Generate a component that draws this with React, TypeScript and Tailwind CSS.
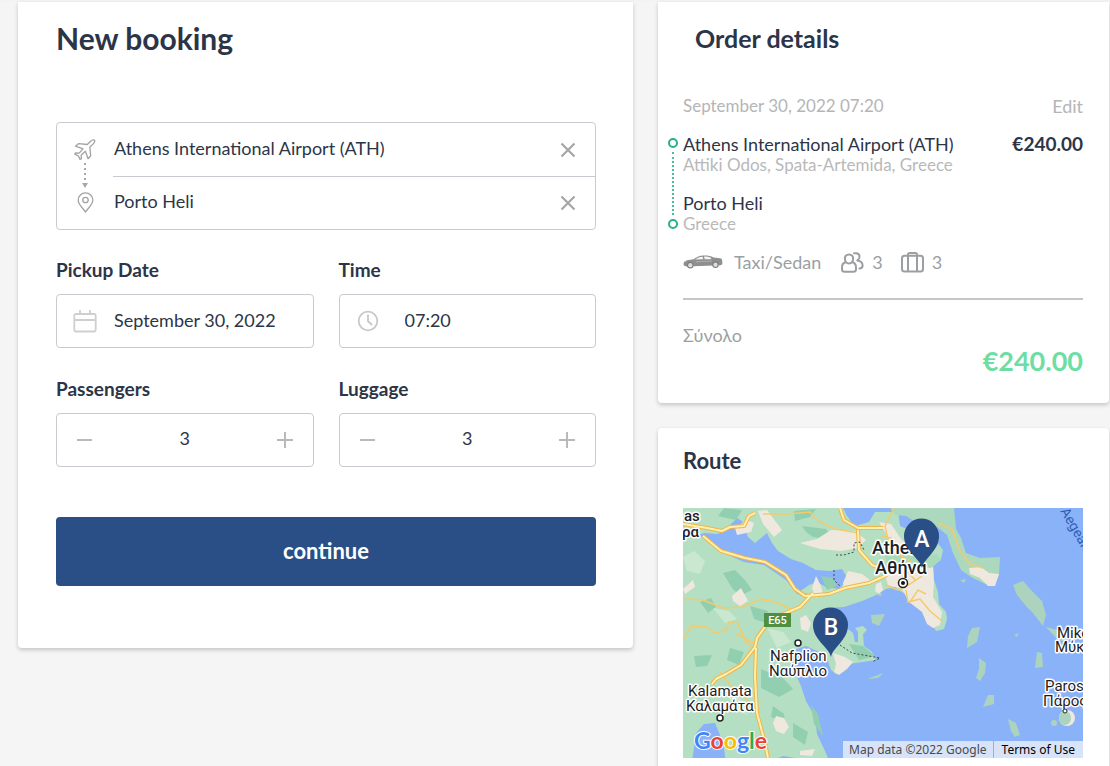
import React, { useState } from 'react';

interface CounterProps {
  id: string;
  label: string;
}

interface LocationRowProps {
  label: string;
  defaultValue: string;
}

const PlaneIcon = () => (
  <svg width="22" height="22" viewBox="0 0 22 22" fill="none" stroke="#a3a3a3" strokeWidth="1.3" strokeLinejoin="round">
    <path d="M20.6 1.2c-1.3-.6-3 .1-4 1.1l-3.300 3.200L4.700 4.600 1.500 7.200l7.500 2.700-3.800 4.200-3.700-.3-.7 1.300 3.500 1.700 1.700 3.600 1.400-.7-.2-3.800 4.200-3.600 2.700 7.400 2.600-3-.9-8.500 3.400-3.300c1-1 1.800-2.500 1.400-3.700z" />
  </svg>
);

const PinIcon = () => (
  <svg width="17" height="21" viewBox="0 0 17 21" fill="none" stroke="#a3a3a3" strokeWidth="1.3">
    <path d="M8.500 20C6.500 16.800 1.200 12.600 1.200 8.200a7.300 7.300 0 0 1 14.600 0c0 4.400-5.300 8.600-7.300 11.800z" />
    <circle cx="8.500" cy="8" r="2.700" />
  </svg>
);

const ArrowIcon = () => (
  <svg width="8" height="27" viewBox="0 0 8 27" fill="#a8a8a8">
    <path d="M3 2h2v2H3zM3 7h2v2H3zM3 12h2v2H3zM3 17h2v2H3zM1 22h6l-3 5z" />
  </svg>
);

const CrossIcon = () => (
  <svg width="16" height="16" viewBox="0 0 16 16" stroke="#a6a6a6" strokeWidth="2.200">
    <path d="M1.500 1.500l13 13M14.500 1.500l-13 13" />
  </svg>
);

const CalendarIcon = () => (
  <svg width="24" height="24" viewBox="0 0 24 24" fill="none" stroke="#cfcfcf" strokeWidth="1.800">
    <rect x="1.300" y="5" width="21.400" height="17.500" rx="1.500" />
    <path d="M1.300 11h21.400M7 1v4M17 1v4" />
  </svg>
);

const ClockIcon = () => (
  <svg width="22" height="22" viewBox="0 0 22 22" fill="none" stroke="#c8c8c8" strokeWidth="1.800">
    <circle cx="11" cy="11" r="9.300" />
    <path d="M11 4.500v6.800l4.200 3.700" />
  </svg>
);

const CarIcon = () => (
  <svg width="40" height="14" viewBox="0 0 40 14">
    <path d="M.5 9.500C.3 7.600 1.500 6 3.500 5.400c2.400-.7 4.900-.8 7-1.200C13.600 2 16.500.6 20.500.5c4.200-.1 7.400.5 10 2 2.900.2 6.300.4 8 1.300.8 1.200.9 3 .9 4.700-.2 1.200-1 1.600-2 1.700L4 11.400C2 11.400.8 10.700.5 9.500z" fill="#8f8f8f" />
    <path d="M12 4.400c2.300-1.500 4.600-2.500 7.600-2.700l.7 2.600zM21 1.600c2.700 0 5.100.3 7.600 1.600l-1.200 1.100h-5.700z" fill="#f3f3f3" />
    <circle cx="7.300" cy="10.300" r="3.200" fill="#777" />
    <circle cx="32.500" cy="9.700" r="3.200" fill="#777" />
    <circle cx="7.300" cy="10.300" r="2.200" fill="#dcdcdc" />
    <circle cx="32.500" cy="9.700" r="2.200" fill="#dcdcdc" />
    <path d="M1 7l2.500-.8M13 6.800l16-.8" stroke="#b5b5b5" strokeWidth=".8" />
  </svg>
);

const PeopleIcon = () => (
  <svg width="23" height="21" viewBox="0 0 23 21" fill="none" stroke="#9b9fa2" strokeWidth="2" strokeLinecap="round" strokeLinejoin="round">
    <path d="M8 2.500c2.500 0 4.100 1.800 4.100 4.300S10.500 11.500 8 11.500 3.900 9.300 3.900 6.800 5.500 2.500 8 2.500z" />
    <path d="M4.600 10.300C2.200 10.900 1 12.700 1 15.500v1.700c0 1.700.9 2.600 2.600 2.600h8.800c1.700 0 2.600-.9 2.600-2.600v-1.700c0-2.800-1.200-4.600-3.600-5.200M13 1.200h2c2.300 0 3.500 1.300 3.500 3.600 0 1.600-.7 2.900-2.200 3.700 3.600.6 5.300 2.200 5.300 4.800 0 2.200-1.200 3.300-3.200 3.300" />
  </svg>
);

const LuggageIcon = () => (
  <svg width="23" height="21" viewBox="0 0 23 21" fill="none" stroke="#9b9fa2" strokeWidth="2">
    <rect x="1" y="3.800" width="21" height="15.700" rx="2.500" />
    <path d="M7 19.500V2.500C7 1.600 7.600 1 8.500 1h6c.9 0 1.500.6 1.500 1.500v17" />
  </svg>
);

const LocationRow: React.FC<LocationRowProps> = ({ label, defaultValue }) => {
  const [value, setValue] = useState(defaultValue);

  return (
    <div className="flex h-[53px] items-center border-[#c9cacf] pr-[19px] not-first:border-t">
      <input
        aria-label={label}
        value={value}
        onChange={(e) => setValue(e.target.value)}
        className="w-full min-w-0 flex-1 bg-transparent pb-1 pl-px text-[18px] leading-6 outline-none"
      />
      <button type="button" aria-label={`Clear ${label}`} onClick={() => setValue('')}>
        <CrossIcon />
      </button>
    </div>
  );
};

const Counter: React.FC<CounterProps> = ({ id, label }) => {
  const [count, setCount] = useState(3);

  return (
    <div>
      <label htmlFor={id} className="mb-3 block text-[19px] leading-6 font-bold">{label}</label>
      <div className="flex h-[54px] items-center rounded border border-[#c9cacf] px-5">
        <button type="button" aria-label={`Fewer ${label}`} onClick={() => setCount(Math.max(0, count - 1))}>
          <svg width="16" height="16" viewBox="0 0 16 16" stroke="#b9b9b9" strokeWidth="2">
            <path d="M0 8h15" />
          </svg>
        </button>
        <input
          id={id}
          inputMode="numeric"
          value={count}
          onChange={(e) => setCount(Number(e.target.value) || 0)}
          className="w-full min-w-0 flex-1 bg-transparent pb-1 text-center text-[18px] leading-6 outline-none"
        />
        <button type="button" aria-label={`More ${label}`} onClick={() => setCount(count + 1)}>
          <svg width="16" height="16" viewBox="0 0 16 16" stroke="#b9b9b9" strokeWidth="2">
            <path d="M0 8h16M8 0v16" />
          </svg>
        </button>
      </div>
    </div>
  );
};

const RouteMap = () => (
  <svg viewBox="0 0 400 250" preserveAspectRatio="xMidYMid slice" className="block w-full" role="img" aria-label="Route from Athens to Porto Heli">
    <rect width="400" height="250" fill="#8ab2f8" />
    {/* Mainland and Attica */}
    <path d="M0 0h160l4 8 8 10 14-4 6-10h23l2 14 18 8 17 6 8 10-2 9-8 7 1 14 4 12 1 12 7 8 1 7-3 10-8 2-7-11-3-10-9-3-6-10-11-6-5-4-9 2-12 7-12 5-18 6-18 1-10-2-3-11-14-3 10-7 8-3 9 5 13 2 9-10-6-10-12 2-14-1-13-7-12-4-13-8-6-8-5-10-12 10-7-6-6-16-5-3-6 6-3 6-11 4-12-1-13 3-12-7-13-4-13-2z" fill="#b5dfc2" />
    {/* Peloponnese */}
    <path d="M0 28l22 1 19 16 20 9 20 3 22 15 11 14 13 3h16l4 12 8 12 15 12 2 9h3l0-10-3-4 8-2 4 4-4 4 1 12 8 6 4 8-27 4-13 10-5-4-5-15-20-9-15 5 3 20 7 15 5 15 9 16 2 17 8 17 5 12H115l-2-5-13-2-15 6H43l-3-20-8-19-11 1-8 9-4 29H0z" fill="#b5dfc2" />
    {/* Evia */}
    <path d="M207 0h64l2 21 5 9 5 15 14 5 20-1-1 18-5 11-11-3-12-6-10-7-8-17-6-18-10-8-18-3-13-8-10-1z" fill="#acd8bd" />
    {/* Islands */}
    <g fill="#acd3bd">
      <path d="M188 107l14-1-6 12-7-3zM289 120l8-1-3 15-10 6 1-12zM296 150l7 5-1 10-5 8-4-3 3-9zM305 187h6v9l-11 3zM325 211l8 4 4 12-5 2-4-6zM330 77l10-4 8 9 11 11 4 14-3 11-10-13-7-7-9-11zM363 119l12 3 8 12-8-2zM354 144l5 1 1 14-8 1zM184 171l16-6-5 5zM331 127l5-2-2 4zM277 72l6-1-2 4zM193 87l6-2-1 3z" />
      <path d="M41 0l18 2-6 10-18-4zM111 3l22-2-6 8-15 4zM119 18l24 3 7 11-20-3-7-5zM17 94l11-4 5 9-8 6zM40 65l12-3 10 10 7 10-12 6-8-8zM67 98l18 5-2 12-12-4zM47 140l14 4-5 13-12-5zM78 161l22 9 10 11-14 8-18-9zM11 148l18-1-5 11-11 1zM110 215l15 9-3 13-12-8zM90 198l11 8 1 8-14-5zM128 197l7 9 5 22-9-12zM166 136l14 2 12 10-16 4zM138 68l12 2 4 8-10 4z" fill="#92ceb0" />
      <path d="M0 49l11-6 11 10-5 13-13-3zM44 180l17 14 3 13-15-6zM84 120l16 4 8 10-14 6zM30 100l16 3 8 8-12 4z" fill="#c9e8cf" />
    </g>
    <g fill="#efe8df">
      <path d="M75 3l9-1 15 20-8 7-11-13zM52 20l12-8 7 3-3 9-14 3zM117 35l17-4 14-9 24 1 11 9-8 8-17 3-21-2-10-3zM160 75l5-12 14 3 8 6-12 7-14 3zM133 68l4 8 3 9-7 5-4-10zM49 88l9-8 7 13-8 5-7-5zM0 81l10-9 2 7-10 7z" />
      <path d="M196 14l12 2 10 15 22 17 10 10 1 17-1 14 9 15-2 13-7 3-6-4-5-12-13-10-7-13-14-4-4-13 8-15-4-20zM286 60l12-1 8 6 10 1-4 12-7 0-8-8-10-4zM193 76l5-2 2 8-4 4-4-3zM150 145l12 4 8 5-6 7-8 6-5-3 2-8zM117 110l6-3 5 8-3 9-7-3zM93 208l8 2 5 9-5 7-8-3-3-8zM117 243l15-2-3 7-12-1z" />
    </g>
    <path d="M202 47l14-3 20 6 18-4 4 6-10 8-22-3-22 3z" fill="#a9dab9" />
    <path d="M166 8l8-1 8 6-8 4-6-3z" fill="#8ab2f8" />
    <circle cx="384" cy="210" r="8" fill="#efe8df" />
    <ellipse cx="382" cy="210" rx="6" ry="7" fill="#acd3bd" />
    <circle cx="371" cy="215" r="3" fill="#acd3bd" />
    {/* Roads */}
    <g fill="none" stroke="#f3cb6c" strokeWidth="1.500">
      <path d="M0 91l20 1 20 8 20-1 17-8 15 3 18 8M80 6l25 0 22-2 8 9 18 8 22 4M0 132l8-14 15 1 9 6 12-3 2-8h8l8 18 9 10M202 77l13 5 12-6 12-8M223 82l2 12 12-3 10 12 12 10M227 94l8-12 8 4M198 28l10 2 11 20 10 3M211 0l-9 18 4 18 14 13 3 13 9 10M37 164l10 13 10 8 18 18M52 125l9 5 9 5M255 15l14 6 8 22 10 13 13 4" />
    </g>
    <g fill="none" stroke="#f0b548" strokeWidth="4" strokeLinejoin="round">
      <path d="M0 16l24 4 15 3 8-4 14-1 5-10 6-3M20 28l18 15 24 7 20 4 21 13 9 14 10 7 24-2 16-6 24-5 18-8M130 85l-13 14-17 7-16 10-10 14-2 9-14 18-15 9-10 5-4 5M73 140l-1 28 2 37 8 30 3 15M157 0l4 12 14 8 25 0M175 22l1 20 13 15 8 3" />
    </g>
    <g fill="none" stroke="#fff0ad" strokeWidth="2" strokeLinejoin="round">
      <path d="M0 16l24 4 15 3 8-4 14-1 5-10 6-3M20 28l18 15 24 7 20 4 21 13 9 14 10 7 24-2 16-6 24-5 18-8M130 85l-13 14-17 7-16 10-10 14-2 9-14 18-15 9-10 5-4 5M73 140l-1 28 2 37 8 30 3 15M157 0l4 12 14 8 25 0M175 22l1 20 13 15 8 3" />
    </g>
    <path d="M153 47h8l10-3 0-9 6-1 4 8M151 62l0 10 6 6M157 137l12 8 28 5-8 4" fill="none" stroke="#3f4a45" strokeWidth="1" strokeDasharray="2 2" />
    <rect x="81" y="105" width="27" height="14" fill="#4f8f3f" />
    <text x="94.500" y="116" textAnchor="middle" fill="#fff" className="font-[Roboto] text-[11px] font-medium">E65</text>
    <g className="font-[Roboto] text-[15px]" fill="#1d1d1f" stroke="#fff" strokeWidth="3" strokeLinejoin="round" paintOrder="stroke">
      <text x="1" y="13" className="font-medium">as</text>
      <text x="-1" y="29" className="font-medium">ρα</text>
      <text x="87" y="153">Nafplion</text>
      <text x="86" y="168">Ναύπλιο</text>
      <text x="5" y="188">Kalamata</text>
      <text x="3" y="203">Καλαμάτα</text>
      <text x="374" y="130">Mikonos</text>
      <text x="372" y="144">Μύκονος</text>
      <text x="362" y="183">Paros</text>
      <text x="360" y="198">Πάρος</text>
      <text x="189" y="46" className="text-[18px] font-medium">Athens</text>
      <text x="192" y="66" className="text-[18px] font-medium">Αθήνα</text>
    </g>
    <g fill="#fff" stroke="#222" strokeWidth="1.500">
      <circle cx="115" cy="135" r="3" />
      <circle cx="37" cy="210" r="3" />
      <circle cx="220" cy="75" r="4.500" />
      <circle cx="382" cy="203" r="2" strokeWidth="1" />
    </g>
    <circle cx="220" cy="75" r="2" fill="#111" />
    <text x="377" y="3" transform="rotate(60 377 3)" fill="#2f5fb5" className="font-[Roboto] text-[14px]">Aegean</text>
    {/* Route pins */}
    <g fill="#2a4f86">
      <path d="M239 60c-2-10-18-17-18-32a17.500 17.500 0 0 1 35 0c0 15-15 22-17 32z" />
      <path d="M148 149c-2-10-18-17-18-32a17.500 17.500 0 0 1 35 0c0 15-15 22-17 32z" />
    </g>
    <g fill="#fff" textAnchor="middle" className="font-[Roboto] text-[23px] font-medium">
      <text x="239" y="39">A</text>
      <text x="148" y="127">B</text>
    </g>
    <text x="11" y="241" stroke="#fff" strokeWidth="2" paintOrder="stroke" className="font-[Lato] text-[23px] font-bold">
      <tspan fill="#4285f4">G</tspan>
      <tspan fill="#ea4335">o</tspan>
      <tspan fill="#fbbc05">o</tspan>
      <tspan fill="#4285f4">g</tspan>
      <tspan fill="#34a853">l</tspan>
      <tspan fill="#ea4335">e</tspan>
    </text>
  </svg>
);

const App = () => {
  const [date, setDate] = useState('September 30, 2022');
  const [time, setTime] = useState('07:20');

  return (
    <main className="grid min-h-screen grid-cols-[15fr_11fr] items-start gap-[25px] border-t-2 border-[#f3f3f3] bg-[#f5f5f5] pr-px pl-[18px] font-[Lato,'Noto_Sans',sans-serif] text-[#2c3547]">
      <form className="rounded-b bg-white pt-4 pr-[37px] pb-[62px] pl-[38px] shadow-[0_2px_4px_rgba(0,0,0,0.2)]" onSubmit={(e) => e.preventDefault()}>
        <h1 className="text-[30px] leading-10 font-bold">New booking</h1>

        {/* Locations */}
        <div className="mt-16 flex rounded border border-[#c9cacf]">
          <div className="flex w-14 shrink-0 flex-col items-center pt-4">
            <PlaneIcon />
            <ArrowIcon />
            <div className="pt-1"><PinIcon /></div>
          </div>
          <div className="min-w-0 flex-1">
            <LocationRow label="Pickup location" defaultValue="Athens International Airport (ATH)" />
            <LocationRow label="Drop-off location" defaultValue="Porto Heli" />
          </div>
        </div>

        <div className="mt-7 grid grid-cols-2 gap-x-[25px] gap-y-[29px]">
          <div>
            <label htmlFor="date" className="mb-3 block text-[19px] leading-6 font-bold">Pickup Date</label>
            <div className="flex h-[54px] items-center rounded border border-[#c9cacf] pl-4">
              <CalendarIcon />
              <input
                id="date"
                value={date}
                onChange={(e) => setDate(e.target.value)}
                className="ml-[17px] w-full min-w-0 flex-1 bg-transparent pb-0.5 text-[18px] leading-6 outline-none"
              />
            </div>
          </div>
          <div>
            <label htmlFor="time" className="mb-3 block text-[19px] leading-6 font-bold">Time</label>
            <div className="flex h-[54px] items-center rounded border border-[#c9cacf] pl-[17px]">
              <ClockIcon />
              <input
                id="time"
                value={time}
                onChange={(e) => setTime(e.target.value)}
                className="ml-[26px] w-full min-w-0 flex-1 bg-transparent pb-0.5 text-[18px] leading-6 outline-none"
              />
            </div>
          </div>
          <Counter id="passengers" label="Passengers" />
          <Counter id="luggage" label="Luggage" />
        </div>

        <button type="submit" className="mt-[50px] h-[69px] w-full rounded bg-[#2a4f86] pb-0.5 text-[22px] font-bold text-white">
          continue
        </button>
      </form>

      <div className="space-y-[25px]">
        {/* Order summary */}
        <section className="rounded-b bg-white pt-4 pr-[26px] pb-[27px] pl-[25px] shadow-[0_2px_4px_rgba(0,0,0,0.2)]">
          <h2 className="pl-3 text-[25px] leading-10 font-bold">Order details</h2>
          <div className="mt-9 flex items-center justify-between leading-6 text-[#b5b5b5]">
            <span className="text-[17px]">September 30, 2022 07:20</span>
            <a href="#edit" className="text-[18px]">Edit</a>
          </div>

          <div className="mt-[15px] -ml-[15px] flex gap-[5px]">
            <div className="flex w-2.5 shrink-0 flex-col items-center gap-1 py-[5px]">
              <span className="size-2.5 rounded-full border-2 border-[#27b08b]" />
              <span className="flex-1 border-l-2 border-dotted border-[#4dbd9f]" />
              <span className="size-2.5 rounded-full border-2 border-[#27b08b]" />
            </div>
            <div className="flex-1">
              <div className="flex justify-between leading-[22px]">
                <span className="text-[18px]">Athens International Airport (ATH)</span>
                <strong className="text-[19px]">€240.00</strong>
              </div>
              <p className="text-[17px] leading-5 text-[#b9b9b9]">Attiki Odos, Spata-Artemida, Greece</p>
              <p className="mt-[17px] text-[18px] leading-[22px]">Porto Heli</p>
              <p className="text-[17px] leading-5 text-[#b9b9b9]">Greece</p>
            </div>
          </div>

          <div className="mt-4 flex h-6 items-center text-[18px] leading-6 text-[#9b9fa2]">
            <CarIcon />
            <span className="ml-[11px]">Taxi/Sedan</span>
            <span className="ml-5 flex items-center gap-2"><PeopleIcon />3</span>
            <span className="ml-[18px] flex items-center gap-2"><LuggageIcon />3</span>
          </div>

          <hr className="mt-6 border-t-2 border-[#c6c6c6]" />
          <p className="mt-6 text-[18px] leading-[22px] text-[#9b9fa2]">Σύνολο</p>
          <p className="text-right text-[27px] leading-[30px] font-bold text-[#6ddea3]">€240.00</p>
        </section>

        <section className="rounded bg-white pt-[19px] pr-[26px] pb-6 pl-[25px] shadow-[0_2px_4px_rgba(0,0,0,0.2)]">
          <h2 className="text-[22px] leading-7 font-bold">Route</h2>
          <div className="relative mt-[33px]">
            <RouteMap />
            <div className="absolute right-0 bottom-0 flex font-['Noto_Sans'] text-[12px] leading-[17px]">
              <span className="bg-[#d6e3f8] px-1.5 text-[#4a4a4a]">Map data ©2022 Google</span>
              <a href="#terms" className="ml-px bg-[#d6e3f8] px-2 text-black">Terms of Use</a>
            </div>
          </div>
        </section>
      </div>
    </main>
  );
};

export default App;
